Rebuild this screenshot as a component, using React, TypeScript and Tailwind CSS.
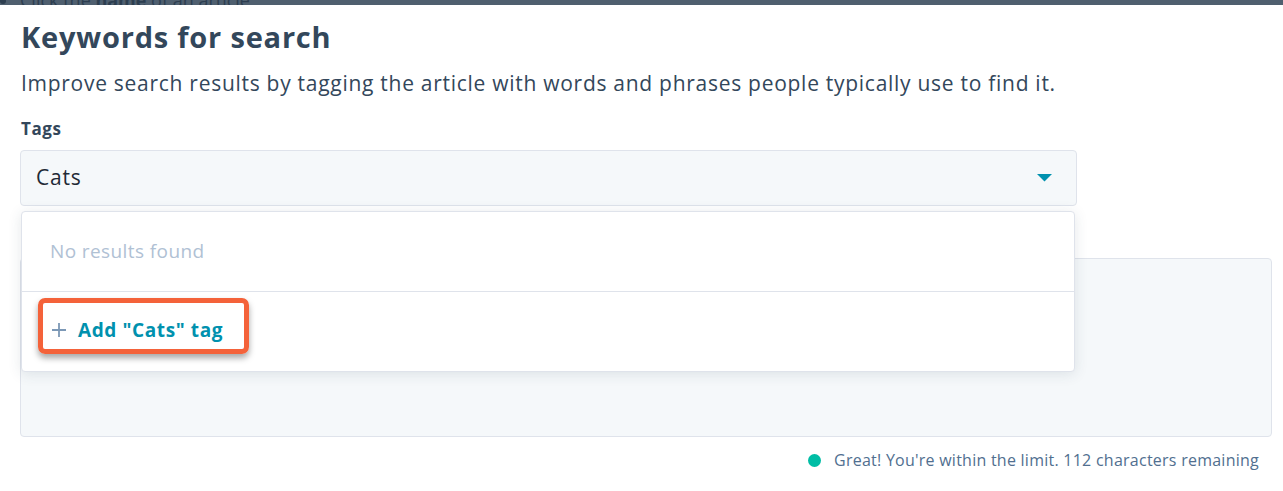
import React from "react";

export default function App() {
  const font = { fontFamily: '"Open Sans", "Noto Sans", sans-serif' };
  return (
    <div className="relative w-[1283px] h-[491px] overflow-hidden bg-white text-[#33475b]" style={font}>
      {/* top clipped bar */}
      <div className="relative h-[5px] bg-[#4f5f6f] overflow-hidden">
        <div className="absolute left-0 top-[-13px] flex items-center gap-[14px] text-[18px] text-[#2d3e50] whitespace-nowrap">
          <span className="w-[6px] h-[6px] rounded-full bg-[#2d3e50]" />
          <span>
            Click the <b>name</b> of an article
          </span>
        </div>
      </div>

      <div className="pl-[21px] pr-[11px]">
        <h1 className="mt-[14px] text-[29px] leading-[36px] font-bold tracking-[0.8px] text-[#33475b]">
          Keywords for search
        </h1>
        <p className="mt-[14px] text-[21px] leading-[28px] tracking-[0.72px] text-[#33475b]">
          Improve search results by tagging the article with words and phrases people typically use to find it.
        </p>
        <div className="mt-[21px] text-[17px] leading-[22px] font-bold tracking-[0.6px] text-[#33475b]">Tags</div>

        <div className="relative mt-[10px] w-[1057px] -ml-px">
          <div className="h-[56px] rounded-[4px] border border-[#dfe3eb] bg-[#f5f8fa] flex items-center justify-between pl-[15px] pr-[24px]">
            <span className="text-[21px] tracking-[0.8px] text-[#1f2a36]">Cats</span>
            <svg width="15" height="8" viewBox="0 0 15 8">
              <path d="M0 0 L15 0 L7.5 7.5 Z" fill="#0091ae" />
            </svg>
          </div>

          {/* dropdown */}
          <div className="absolute left-[1px] top-[61px] w-[1054px] z-10 rounded-[4px] border border-[#dfe3eb] bg-white shadow-[0_2px_14px_rgba(45,62,80,0.12)]">
            <div className="h-[79px] flex items-center pl-[28px] text-[19px] tracking-[0.4px] text-[#b0c1d4]">No results found</div>
            <div className="border-t border-[#dfe3eb] h-[80px] relative">
              <div className="absolute left-[16px] top-[6px] w-[211px] h-[56px] rounded-[7px] border-[5px] border-[#f4623a] shadow-[0_4px_6px_rgba(0,0,0,0.35)]" />
              <div className="absolute left-[30px] top-[26px] flex items-center gap-[12px]">
                <svg width="14" height="14" viewBox="0 0 14 14">
                  <path d="M7 0 V14 M0 7 H14" stroke="#7c98b6" strokeWidth="1.8" />
                </svg>
                <span className="text-[19px] leading-[24px] font-bold tracking-[0.6px] text-[#0091ae]">Add "Cats" tag</span>
              </div>
            </div>
          </div>
        </div>

        <div className="mt-[52px] h-[179px] w-[1252px] -ml-px rounded-[4px] border border-[#dfe3eb] bg-[#f5f8fa]" />

        <div className="mt-[12px] flex items-center justify-end pr-[13px] gap-[13px]">
          <span className="w-[13px] h-[13px] rounded-full bg-[#00bda5]" />
          <span className="text-[16px] leading-[22px] tracking-[0.25px] text-[#516f90]">
            Great! You're within the limit. 112 characters remaining
          </span>
        </div>
      </div>
    </div>
  );
}
